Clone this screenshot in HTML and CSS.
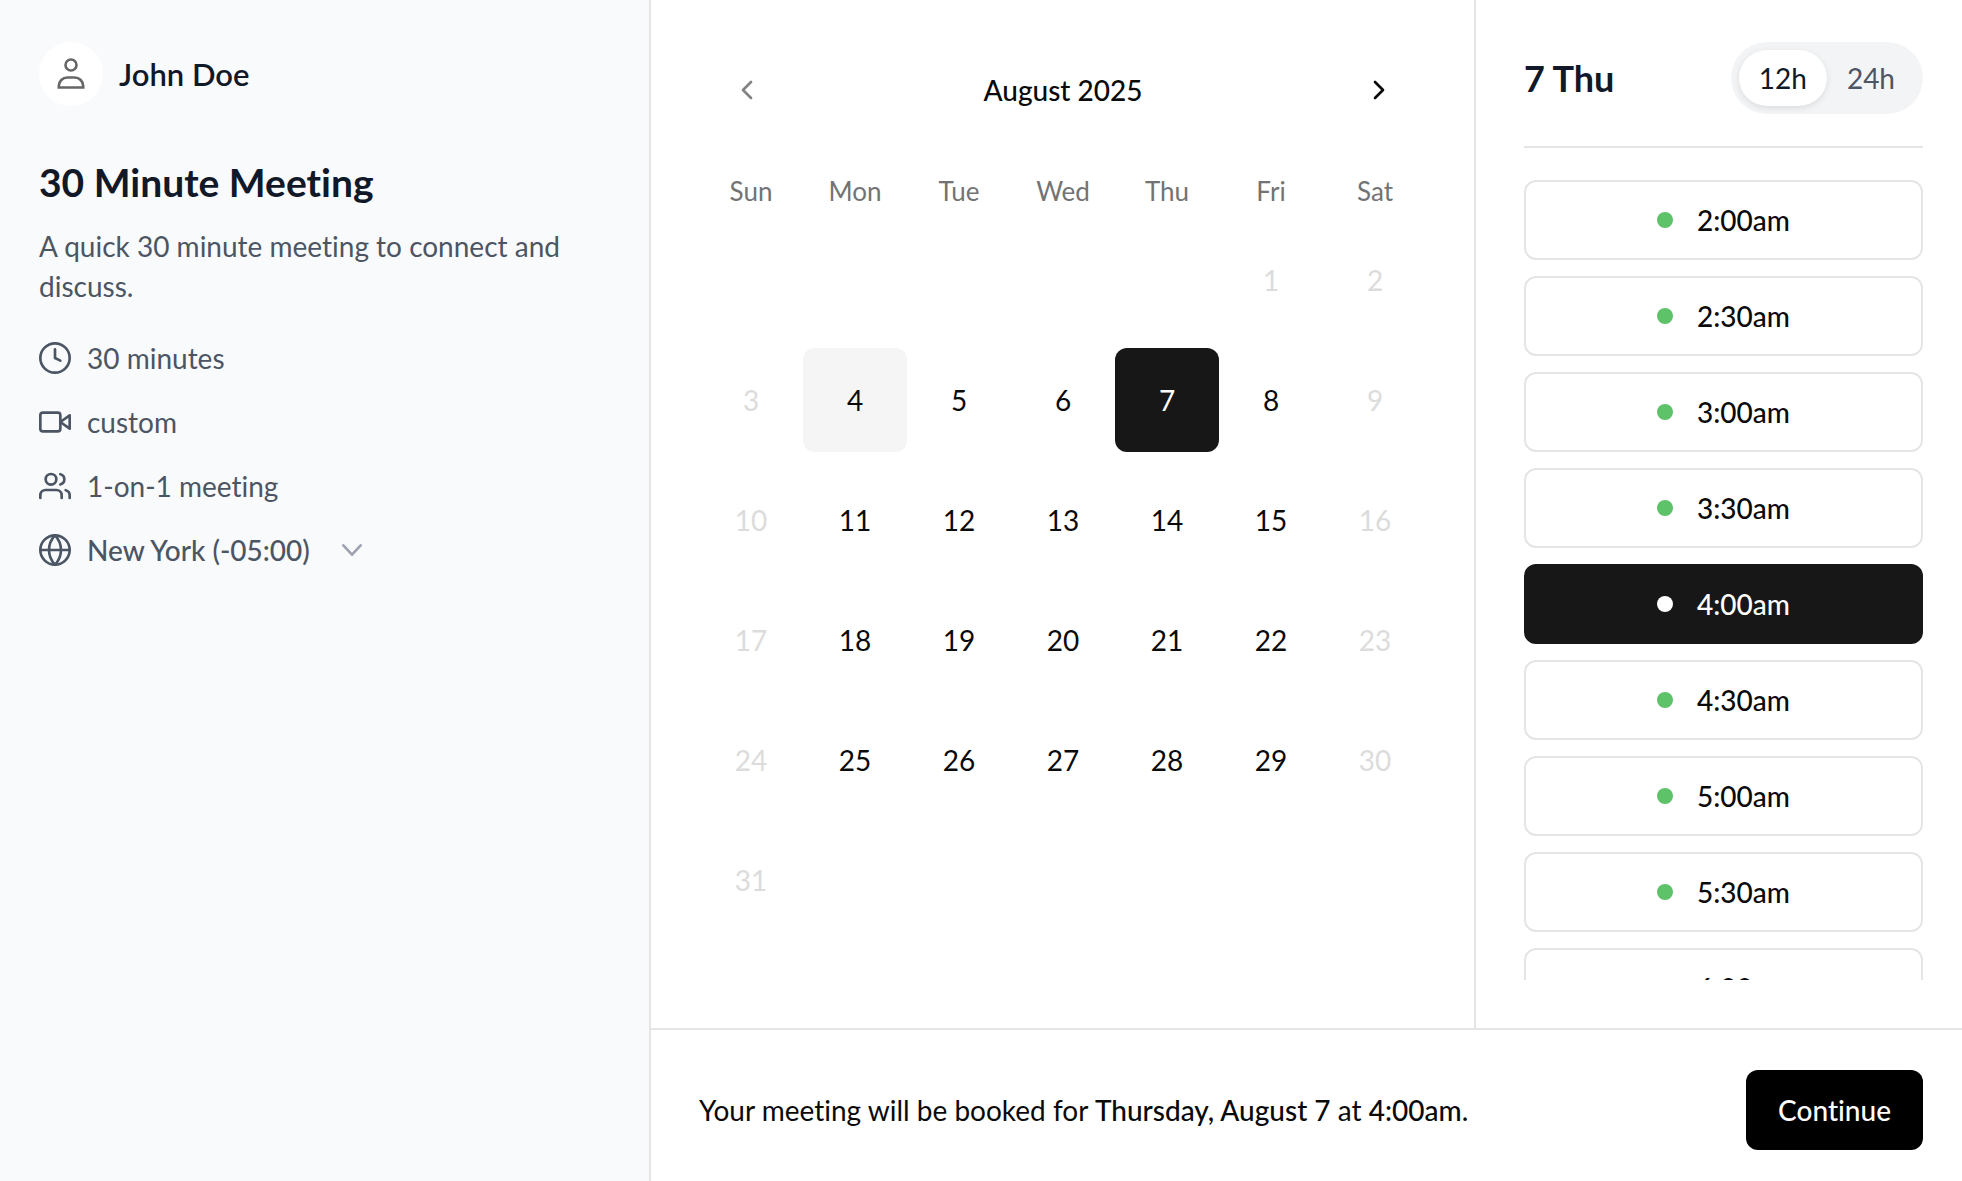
FILE: index.html
```html
<!DOCTYPE html>
<html lang="en">
<head>
    <meta charset="UTF-8">
    <meta name="viewport" content="width=device-width, initial-scale=1.0">
    <link rel="stylesheet" href="styles.css">
    <title>30 Minute Meeting</title>
</head>
<body>
    <div class="booking">
        <aside class="sidebar">
            <div class="host">
                <span class="avatar">
                    <svg viewBox="0 0 32 32" fill="none" stroke="#666" stroke-width="2.6">
                        <circle cx="16" cy="7" r="5.5"/>
                        <path d="M3.800 29.500v-1.500a8.500 8.500 0 0 1 8.500-8.500h7.400a8.500 8.500 0 0 1 8.500 8.500v1.500z"/>
                    </svg>
                </span>
                <span class="hostName">John Doe</span>
            </div>
            <h1 class="eventTitle">30 Minute Meeting</h1>
            <p class="eventText">A quick 30 minute meeting to connect and discuss.</p>
            <ul class="details">
                <li class="detail">
                    <svg class="icon" viewBox="0 0 24 24"><circle cx="12" cy="12" r="11"/><path d="M12 5.500V12l4 2"/></svg>
                    30 minutes
                </li>
                <li class="detail">
                    <svg class="icon" viewBox="0 0 24 24"><rect x="1" y="5" width="15" height="14" rx="2"/><path d="M23 7l-7 5 7 5z"/></svg>
                    custom
                </li>
                <li class="detail">
                    <svg class="icon" viewBox="0 0 24 24"><path d="M17 21v-2a4 4 0 0 0-4-4H5a4 4 0 0 0-4 4v2"/><circle cx="9" cy="7" r="4"/><path d="M23 21v-2a4 4 0 0 0-3-3.870M16 3.130a4 4 0 0 1 0 7.750"/></svg>
                    1-on-1 meeting
                </li>
                <li class="detail">
                    <svg class="icon" viewBox="0 0 24 24"><circle cx="12" cy="12" r="11"/><path d="M1 12h22M12 1a16 16 0 0 1 4.500 11A16 16 0 0 1 12 23a16 16 0 0 1-4.500-11A16 16 0 0 1 12 1z"/></svg>
                    <select class="timezone" aria-label="Time zone">
                        <option>New York (-05:00)</option>
                    </select>
                    <svg class="icon chevron" viewBox="0 0 24 24"><path d="M5.500 8.500l6.500 7 6.500-7"/></svg>
                </li>
            </ul>
        </aside>

        <section class="calendar">
            <div class="monthBar">
                <button class="monthButton" disabled aria-label="Previous month">
                    <svg class="icon" viewBox="0 0 24 24"><path d="M15 18l-6-6 6-6"/></svg>
                </button>
                <h2 class="month">August 2025</h2>
                <button class="monthButton" aria-label="Next month">
                    <svg class="icon" viewBox="0 0 24 24"><path d="M9 18l6-6-6-6"/></svg>
                </button>
            </div>
            <table class="days">
                <thead>
                    <tr><th>Sun</th><th>Mon</th><th>Tue</th><th>Wed</th><th>Thu</th><th>Fri</th><th>Sat</th></tr>
                </thead>
                <tbody>
                    <tr>
                        <td></td><td></td><td></td><td></td><td></td>
                        <td><button class="day" disabled>1</button></td>
                        <td><button class="day" disabled>2</button></td>
                    </tr>
                    <tr>
                        <td><button class="day" disabled>3</button></td>
                        <td><button class="day today">4</button></td>
                        <td><button class="day">5</button></td>
                        <td><button class="day">6</button></td>
                        <td><button class="day selected">7</button></td>
                        <td><button class="day">8</button></td>
                        <td><button class="day" disabled>9</button></td>
                    </tr>
                    <tr>
                        <td><button class="day" disabled>10</button></td>
                        <td><button class="day">11</button></td>
                        <td><button class="day">12</button></td>
                        <td><button class="day">13</button></td>
                        <td><button class="day">14</button></td>
                        <td><button class="day">15</button></td>
                        <td><button class="day" disabled>16</button></td>
                    </tr>
                    <tr>
                        <td><button class="day" disabled>17</button></td>
                        <td><button class="day">18</button></td>
                        <td><button class="day">19</button></td>
                        <td><button class="day">20</button></td>
                        <td><button class="day">21</button></td>
                        <td><button class="day">22</button></td>
                        <td><button class="day" disabled>23</button></td>
                    </tr>
                    <tr>
                        <td><button class="day" disabled>24</button></td>
                        <td><button class="day">25</button></td>
                        <td><button class="day">26</button></td>
                        <td><button class="day">27</button></td>
                        <td><button class="day">28</button></td>
                        <td><button class="day">29</button></td>
                        <td><button class="day" disabled>30</button></td>
                    </tr>
                    <tr>
                        <td><button class="day" disabled>31</button></td>
                        <td></td><td></td><td></td><td></td><td></td><td></td>
                    </tr>
                </tbody>
            </table>
        </section>

        <section class="times">
            <div class="timesHeader">
                <h2 class="timesTitle">7 Thu</h2>
                <div class="formatToggle">
                    <button class="formatButton active">12h</button>
                    <button class="formatButton">24h</button>
                </div>
            </div>
            <div class="slots">
                <button class="slot"><span class="dot"></span>2:00am</button>
                <button class="slot"><span class="dot"></span>2:30am</button>
                <button class="slot"><span class="dot"></span>3:00am</button>
                <button class="slot"><span class="dot"></span>3:30am</button>
                <button class="slot selected"><span class="dot"></span>4:00am</button>
                <button class="slot"><span class="dot"></span>4:30am</button>
                <button class="slot"><span class="dot"></span>5:00am</button>
                <button class="slot"><span class="dot"></span>5:30am</button>
                <button class="slot"><span class="dot"></span>6:00am</button>
            </div>
        </section>

        <footer class="confirm">
            <p class="summary">Your meeting will be booked for <strong>Thursday, August 7</strong> at <strong>4:00am</strong>.</p>
            <button class="continue">Continue</button>
        </footer>
    </div>
</body>
</html>
```

FILE: styles.css
```css
* {
    box-sizing: border-box;
}

body {
    margin: 0;
    background-color: #fff;
    color: #0a0a0a;
    font-family: Lato, "Liberation Sans", sans-serif;
    font-size: 28px;
    line-height: 40px;
    font-variant-ligatures: none;
}

h1, h2, p, ul {
    margin: 0;
    padding: 0;
}

button, select {
    border: 0;
    padding: 0;
    background: none;
    color: inherit;
    font: inherit;
    font-variant-ligatures: none;
}

button {
    cursor: pointer;
}

.booking {
    display: grid;
    grid-template-columns: minmax(0, 1fr) auto 488px;
    grid-template-rows: minmax(0, 1fr) auto;
    height: 100vh;
}

.icon {
    width: 32px;
    height: 32px;
    flex: none;
    fill: none;
    stroke: currentColor;
    stroke-width: 2;
    stroke-linecap: round;
    stroke-linejoin: round;
}

/* left column */
.sidebar {
    grid-row: 1 / 3;
    padding: 42px 39px;
    background-color: #f9fafc;
    border-right: 2px solid #e5e5e5;
    color: #4b5563;
}

.host {
    display: flex;
    align-items: center;
    gap: 16px;
    margin-bottom: 52px;
}

.avatar {
    display: flex;
    align-items: center;
    justify-content: center;
    width: 64px;
    height: 64px;
    border-radius: 50%;
    background-color: #fff;
}

.avatar svg {
    width: 32px;
    height: 32px;
}

.hostName {
    color: #111827;
    font-size: 31px;
    font-weight: 600;
}

.eventTitle {
    color: #111827;
    font-size: 39px;
    font-weight: 700;
    line-height: 48px;
    margin-bottom: 20px;
}

.details {
    display: flex;
    flex-direction: column;
    gap: 24px;
    margin-top: 32px;
    list-style: none;
}

.detail {
    display: flex;
    align-items: center;
    gap: 16px;
}

.timezone {
    appearance: none;
    font-weight: 500;
}

.chevron {
    margin-left: 8px;
    color: #9ca3af;
}

/* month view */
.calendar {
    padding: 48px 47px 0 48px;
}

.monthBar {
    display: flex;
    align-items: center;
    justify-content: space-between;
    height: 84px;
    padding: 0 20px;
    margin-bottom: 22px;
}

.month {
    font-size: 28px;
    font-weight: 500;
}

.monthButton {
    display: flex;
    align-items: center;
    justify-content: center;
    width: 56px;
    height: 56px;
}

.monthButton:disabled {
    opacity: 0.5;
}

.days {
    border-spacing: 0 16px;
}

.days th {
    height: 42px;
    padding: 0;
    color: #737373;
    font-size: 26px;
    font-weight: 400;
}

.days td {
    width: 104px;
    height: 104px;
    padding: 0;
}

.day {
    display: block;
    width: 104px;
    height: 104px;
    border-radius: 12px;
}

.day:disabled {
    color: #dcdcdc;
}

.day.today {
    background-color: #f5f5f5;
}

.day.selected {
    background-color: #171717;
    color: #fff;
}

/* time slots */
.times {
    display: flex;
    flex-direction: column;
    padding: 42px 39px 48px 48px;
    border-left: 2px solid #e5e5e5;
}

.timesHeader {
    display: flex;
    align-items: center;
    justify-content: space-between;
    padding-bottom: 32px;
    border-bottom: 2px solid #e5e5e5;
    margin-bottom: 32px;
}

.timesTitle {
    color: #111827;
    font-size: 36px;
    font-weight: 700;
}

.formatToggle {
    display: flex;
    padding: 8px;
    border-radius: 36px;
    background-color: #f3f4f6;
}

.formatButton {
    height: 56px;
    padding: 0 20px;
    border-radius: 28px;
    color: #4b5563;
}

.formatButton.active {
    background-color: #fff;
    color: #111827;
    box-shadow: 0 2px 6px rgba(0, 0, 0, 0.1);
}

.slots {
    display: flex;
    flex-direction: column;
    gap: 16px;
    min-height: 0;
    overflow-y: auto;
    scrollbar-width: none;
}

.slot {
    display: flex;
    flex: none;
    align-items: center;
    justify-content: center;
    gap: 24px;
    height: 80px;
    border: 2px solid #e5e5e5;
    border-radius: 12px;
    font-weight: 500;
}

.dot {
    width: 16px;
    height: 16px;
    border-radius: 50%;
    background-color: #5ec269;
}

.slot.selected {
    border-color: #171717;
    background-color: #171717;
    color: #fff;
}

.slot.selected .dot {
    background-color: #fff;
}

/* bottom bar */
.confirm {
    grid-column: 2 / 4;
    display: flex;
    align-items: center;
    justify-content: space-between;
    padding: 40px 39px 31px 48px;
    border-top: 2px solid #e5e5e5;
}

.summary strong {
    font-weight: 500;
}

.continue {
    height: 80px;
    padding: 0 32px;
    border-radius: 12px;
    background-color: #000;
    color: #fff;
    font-weight: 500;
}
```
